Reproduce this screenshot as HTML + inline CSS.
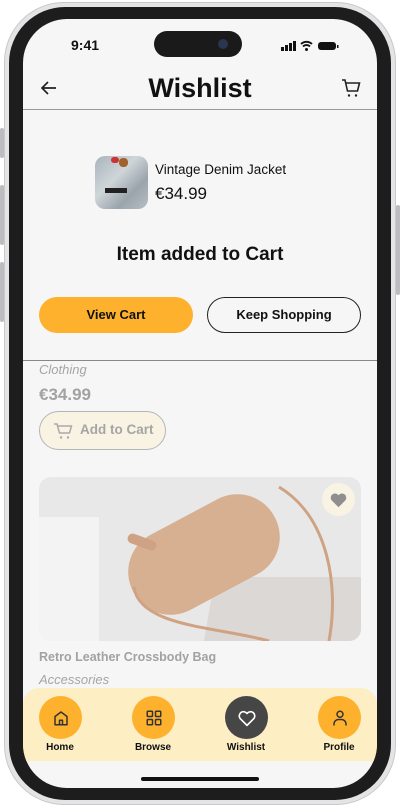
<!DOCTYPE html>
<html><head><meta charset="utf-8"><style>
*{margin:0;padding:0;box-sizing:border-box}
body{width:400px;height:807px;background:#fff;font-family:"Liberation Sans",sans-serif;position:relative;overflow:hidden}
.outer{position:absolute;left:4px;top:2px;width:392px;height:803px;border-radius:60px;background:#e4e4e6;border:1px solid #c9c9cc}
.bez{position:absolute;left:9px;top:7px;width:382px;height:793px;border-radius:56px;background:#1d1d1d}
.scr{position:absolute;left:23px;top:19px;width:354px;height:769px;border-radius:44px;background:#f6f6f6;overflow:hidden}
.btn{position:absolute;background:#bdbdc0;width:4px;border-radius:2px}
.abs{position:absolute}
.nav{position:absolute;left:0;top:669px;width:354px;height:73px;background:#fdeec4;border-radius:16px 16px 0 0}
.ni{position:absolute;top:8px;width:43px;height:43px;border-radius:50%;background:#fdb12d;display:flex;align-items:center;justify-content:center}
.nl{position:absolute;top:54px;width:80px;text-align:center;font-size:10px;font-weight:bold;color:#111}
</style></head><body>
<div class="btn" style="left:0;top:128px;height:30px"></div>
<div class="btn" style="left:0;top:185px;height:60px"></div>
<div class="btn" style="left:0;top:262px;height:60px"></div>
<div class="btn" style="left:396px;top:205px;height:90px"></div>
<div class="outer"></div>
<div class="bez"></div>
<div class="scr">
 <div class="abs" style="left:48px;top:18px;font-size:14px;font-weight:bold;color:#111">9:41</div>
 <div class="abs" style="left:131px;top:12px;width:88px;height:26px;border-radius:13px;background:#1a1a1a"><div style="position:absolute;right:14px;top:8px;width:10px;height:10px;border-radius:50%;background:#2a3550"></div></div>
 <svg class="abs" style="left:258px;top:21px" width="60" height="12" viewBox="0 0 60 12"><rect x="0" y="7" width="3" height="4" fill="#111"/><rect x="4" y="5" width="3" height="6" fill="#111"/><rect x="8" y="3" width="3" height="8" fill="#111"/><rect x="12" y="1" width="3" height="10" fill="#111"/><path d="M20 4a8 8 0 0 1 11 0M22 6.5a5 5 0 0 1 7 0" stroke="#111" stroke-width="1.8" fill="none"/><circle cx="25.5" cy="9.5" r="1.5" fill="#111"/><rect x="37" y="2" width="18" height="8" rx="3" fill="#111"/><rect x="56" y="5" width="1.5" height="3" fill="#111"/></svg>
 <svg class="abs" style="left:17px;top:61px" width="18" height="16" viewBox="0 0 18 16"><path d="M16 8H2M8 2L2 8l6 6" stroke="#222" stroke-width="1.7" fill="none"/></svg>
 <div class="abs" style="left:0;width:354px;top:54px;text-align:center;font-size:27px;font-weight:bold;color:#111">Wishlist</div>
 <svg class="abs" style="left:318px;top:59px" width="20" height="20" viewBox="0 0 20 20"><path d="M1 2h3l2.5 11h10l2-8H5" stroke="#222" stroke-width="1.6" fill="none"/><circle cx="8" cy="17.5" r="1.2" fill="#222"/><circle cx="15" cy="17.5" r="1.2" fill="#222"/></svg>
 <div class="abs" style="left:0;top:90px;width:354px;height:1px;background:#9a9a9a"></div>
 <div class="abs" style="left:72px;top:137px;width:53px;height:53px;border-radius:10px;background:linear-gradient(135deg,#a8b3bb,#cfd6da 40%,#9aa4ab 70%,#b7bfc4)"><div style="position:absolute;left:10px;top:32px;width:22px;height:5px;background:#222"></div><div style="position:absolute;left:16px;top:1px;width:8px;height:6px;background:#c33;border-radius:3px"></div><div style="position:absolute;left:24px;top:2px;width:9px;height:9px;background:#a0622a;border-radius:4px"></div></div>
 <div class="abs" style="left:132px;top:143px;font-size:13.5px;color:#111">Vintage Denim Jacket</div>
 <div class="abs" style="left:132px;top:165px;font-size:17px;color:#111">€34.99</div>
 <div class="abs" style="left:0;width:354px;top:225px;text-align:center;font-size:19px;font-weight:bold;color:#111">Item added to Cart</div>
 <div class="abs" style="left:16px;top:278px;width:154px;height:36px;border-radius:18px;background:#fdb12d;text-align:center;line-height:36px;font-size:13px;font-weight:bold;color:#111">View Cart</div>
 <div class="abs" style="left:184px;top:278px;width:154px;height:36px;border-radius:18px;border:1.5px solid #222;text-align:center;line-height:33px;font-size:13px;font-weight:bold;color:#111">Keep Shopping</div>
 <div class="abs" style="left:0;top:341px;width:354px;height:1px;background:#888"></div>
 <div class="abs" style="left:16px;top:343px;font-size:13px;font-style:italic;color:#a5a5a5">Clothing</div>
 <div class="abs" style="left:16px;top:366px;font-size:17px;font-weight:bold;color:#a2a2a2">€34.99</div>
 <div class="abs" style="left:16px;top:392px;width:127px;height:39px;border-radius:20px;background:#f9f3e4;border:1.5px solid #b5b5b5"><svg style="position:absolute;left:13px;top:10px" width="20" height="18" viewBox="0 0 20 18"><path d="M1 2h3l2.5 9h10l2-7H5" stroke="#aaa" stroke-width="1.5" fill="none"/><circle cx="8" cy="15.5" r="1.2" fill="#aaa"/><circle cx="15" cy="15.5" r="1.2" fill="#aaa"/></svg><div style="position:absolute;left:40px;top:10px;font-size:13.5px;font-weight:bold;color:#a5a5a5">Add to Cart</div></div>
 <div class="abs" style="left:16px;top:458px;width:322px;height:164px;border-radius:12px;overflow:hidden;background:#e8e8e8">
  <div style="position:absolute;left:0;top:40px;width:60px;height:130px;background:#f3f3f3"></div>
  <div style="position:absolute;left:170px;top:100px;width:160px;height:70px;background:#dcd8d6;transform:skewX(-10deg)"></div>
  <div style="position:absolute;left:85px;top:35px;width:160px;height:85px;border-radius:42px;background:#d7b091;transform:rotate(-28deg)"></div>
  <div style="position:absolute;left:88px;top:60px;width:30px;height:10px;border-radius:5px;background:#cfa283;transform:rotate(20deg)"></div>
  <svg style="position:absolute;left:0;top:0" width="322" height="164"><path d="M240 10 C290 40 300 110 290 164" stroke="#cfa283" stroke-width="3" fill="none"/><path d="M95 110 C100 150 180 150 230 164" stroke="#cfa283" stroke-width="3" fill="none"/></svg>
  <div style="position:absolute;left:283px;top:6px;width:33px;height:33px;border-radius:50%;background:#f9f3e4"><svg style="position:absolute;left:7px;top:8px" width="19" height="17" viewBox="0 0 24 22"><path d="M12 21L3 12a5.5 5.5 0 0 1 9-6.5A5.5 5.5 0 0 1 21 12z" fill="#8f8f8f"/></svg></div>
 </div>
 <div class="abs" style="left:16px;top:631px;font-size:12.5px;font-weight:bold;color:#a2a2a2">Retro Leather Crossbody Bag</div>
 <div class="abs" style="left:16px;top:653px;font-size:13px;font-style:italic;color:#a5a5a5">Accessories</div>
 <div class="nav">
  <div class="ni" style="left:16px"><svg width="18" height="18" viewBox="0 0 24 24"><path d="M4 21V10l8-6 8 6v11zM10 21v-6h4v6" stroke="#333" stroke-width="2" fill="none" stroke-linejoin="round"/></svg></div>
  <div class="ni" style="left:109px"><svg width="18" height="18" viewBox="0 0 24 24" fill="none" stroke="#333" stroke-width="2"><rect x="3" y="3" width="7" height="7" rx="1"/><rect x="14" y="3" width="7" height="7" rx="1"/><rect x="3" y="14" width="7" height="7" rx="1"/><rect x="14" y="14" width="7" height="7" rx="1"/></svg></div>
  <div class="ni" style="left:202px;background:#464646"><svg width="20" height="18" viewBox="0 0 24 22"><path d="M12 20L3.5 11.5a5 5 0 0 1 8.5-6 5 5 0 0 1 8.5 6z" stroke="#fff" stroke-width="2" fill="none" stroke-linejoin="round"/></svg></div>
  <div class="ni" style="left:295px"><svg width="18" height="18" viewBox="0 0 24 24" fill="none" stroke="#333" stroke-width="2"><circle cx="12" cy="7" r="4"/><path d="M4 22v-2a6 6 0 0 1 6-6h4a6 6 0 0 1 6 6v2"/></svg></div>
  <div class="nl" style="left:-3px">Home</div>
  <div class="nl" style="left:90px">Browse</div>
  <div class="nl" style="left:183px">Wishlist</div>
  <div class="nl" style="left:276px">Profile</div>
 </div>
 <div class="abs" style="left:118px;top:758px;width:118px;height:4px;border-radius:2px;background:#111"></div>
</div>
</body></html>
